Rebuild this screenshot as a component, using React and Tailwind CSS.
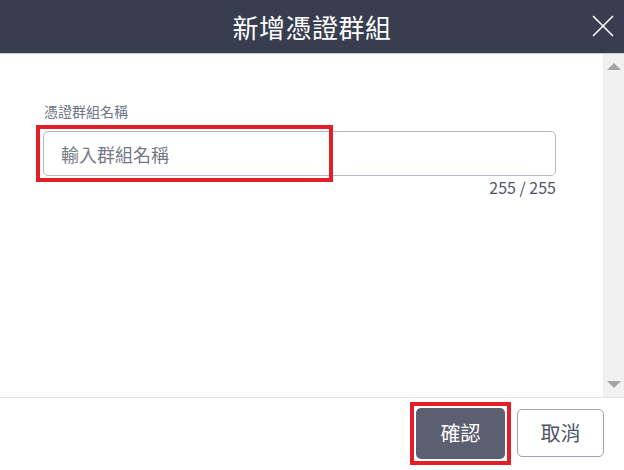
import React from 'react';

const font = { fontFamily: '"Noto Sans CJK TC", "Noto Sans", sans-serif' };

const App = () => {
  return (
    <div className="w-[624px] h-[470px] flex flex-col bg-white overflow-hidden" style={font}>
      {/* header */}
      <div className="relative h-[54px] shrink-0 bg-[#383d4f] flex items-center justify-center border-b border-[#c9ccd3]">
        <h1 className="text-[26px] text-white leading-none tracking-[0.5px]">新增憑證群組</h1>
        <button className="absolute right-[8px] top-[13px] w-[26px] h-[26px] flex items-center justify-center">
          <svg width="24" height="24" viewBox="0 0 24 24" fill="none" stroke="#ffffff" strokeWidth="1.6">
            <path d="M2 2 L22 22 M22 2 L2 22" />
          </svg>
        </button>
      </div>

      {/* body */}
      <div className="flex flex-1 min-h-0 border-b border-[#e3e5ea]">
        <div className="flex-1 pl-[43px] pr-[47px] pt-[47px]">
          <label className="block text-[14px] text-[#6e7486] leading-[20px] mb-[10px] pl-[1px]">憑證群組名稱</label>
          <div className="relative">
            <input
              className="w-full h-[45px] border border-[#b5b8c0] rounded-[5px] px-[17px] text-[18px] text-[#333] placeholder:text-[#757a86] outline-none"
              placeholder="輸入群組名稱"
            />
            <div className="absolute left-[-7px] top-[-6px] w-[297px] h-[57px] border-[4px] border-[#e31e26] pointer-events-none" />
          </div>
          <p className="text-right text-[16px] text-[#505668] leading-[20px] mt-[1px]">255 / 255</p>
        </div>
        <div className="w-[21px] bg-[#f1f1f1] border-l border-[#ececec] flex flex-col items-center justify-between py-[9px]">
          <div className="w-0 h-0 border-l-[7px] border-r-[7px] border-b-[7px] border-l-transparent border-r-transparent border-b-[#a3a3a3]" />
          <div className="w-0 h-0 border-l-[7px] border-r-[7px] border-t-[7px] border-l-transparent border-r-transparent border-t-[#a3a3a3]" />
        </div>
      </div>

      {/* footer */}
      <div className="h-[72px] shrink-0 flex items-center justify-end gap-[12px] pr-[20px] pb-[2px]">
        <div className="relative">
          <button className="w-[89px] h-[51px] rounded-[5px] bg-[#5b6070] text-white text-[20px]">確認</button>
          <div className="absolute left-[-6px] top-[-6px] right-[-6px] bottom-[-6px] border-[4px] border-[#e31e26] pointer-events-none" />
        </div>
        <button className="w-[87px] h-[48px] rounded-[5px] border border-[#9ea2ae] bg-white text-[#4e5466] text-[20px]">取消</button>
      </div>
    </div>
  );
};

export default App;
